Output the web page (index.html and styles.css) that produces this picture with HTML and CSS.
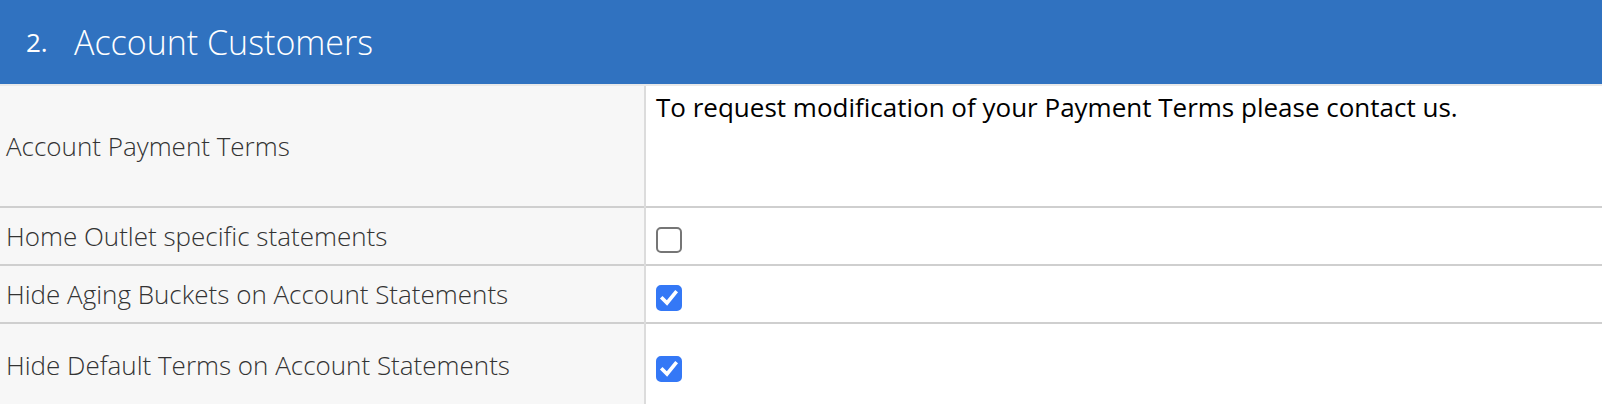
FILE: index.html
```html
<!DOCTYPE html>
<html>
<head>
<meta charset="utf-8">
<link rel="stylesheet" href="styles.css">
</head>
<body>
<div class="panel">
  <div class="panel-head"><span class="num">2.</span><span class="title">Account Customers</span></div>
  <table class="settings">
    <tr class="row-tall">
      <th>Account Payment Terms</th>
      <td class="note">To request modification of your Payment Terms please contact us.</td>
    </tr>
    <tr class="row">
      <th>Home Outlet specific statements</th>
      <td><span class="cb"></span></td>
    </tr>
    <tr class="row">
      <th>Hide Aging Buckets on Account Statements</th>
      <td><span class="cb on"><svg viewBox="0 0 26 26" width="26" height="26"><path d="M6.5 13.5 L11 18 L19.5 7.5" fill="none" stroke="#fff" stroke-width="3.6" stroke-linecap="square"/></svg></span></td>
    </tr>
    <tr class="row-last">
      <th>Hide Default Terms on Account Statements</th>
      <td><span class="cb on"><svg viewBox="0 0 26 26" width="26" height="26"><path d="M6.5 13.5 L11 18 L19.5 7.5" fill="none" stroke="#fff" stroke-width="3.6" stroke-linecap="square"/></svg></span></td>
    </tr>
  </table>
</div>
</body>
</html>
```
FILE: styles.css
```css
html, body { margin: 0; padding: 0; background: #fff; }
body { font-family: "Open Sans", "Liberation Sans", sans-serif; }
.panel { width: 1602px; }
.panel-head {
  background: #3072c0;
  color: #fff;
  display: flex;
  align-items: center;
  padding-left: 26px;
  border-bottom: 2px solid #e9e9e9;
  box-sizing: border-box;
  height: 86px;
}
.num { font-size: 26px; font-weight: 400; width: 48px; }
.title { font-size: 34px; font-weight: 300; }
.settings { width: 100%; border-collapse: collapse; }
.settings th {
  width: 638px;
  background: #f7f7f7;
  text-align: left;
  font-weight: 300;
  font-size: 26px;
  color: #333;
  padding: 0 0 0 6px;
  border-right: 2px solid #dcdcdc;
  vertical-align: middle;
}
.settings td { padding: 0 0 0 10px; vertical-align: middle; font-size: 26px; color: #000; }
.settings tr { border-bottom: 2px solid #cfcfcf; }
.settings tr.row-last { border-bottom: 0; }
.row-tall { height: 121px; }
.row { height: 58px; }
.row-last { height: 82px; }
.settings td.note { vertical-align: top; padding-top: 3px; }
.cb {
  display: inline-block;
  width: 26px; height: 26px;
  box-sizing: border-box;
  border: 2px solid #767676;
  border-radius: 5px;
  background: #fff;
  vertical-align: middle;
  position: relative;
  top: 1px;
}
.cb.on { background: #3478f6; border-color: #3478f6; }
.cb svg { position: absolute; left: -2px; top: -2px; }
```
